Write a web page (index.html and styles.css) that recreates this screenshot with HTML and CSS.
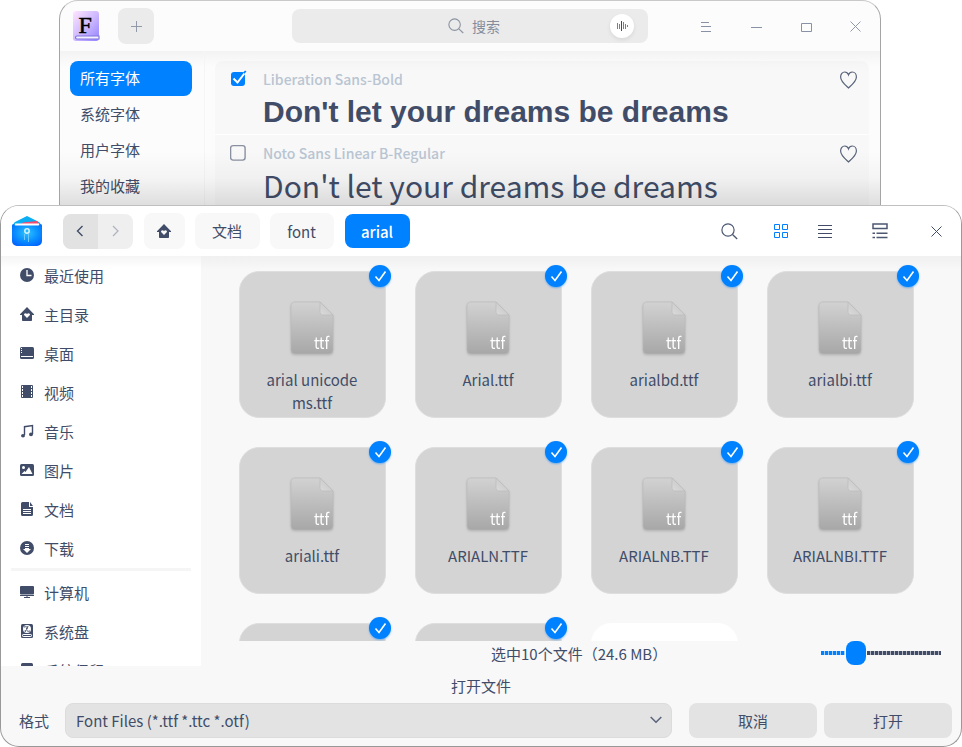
FILE: index.html
```html
<!DOCTYPE html>
<html lang="zh-CN">
<head>
<meta charset="utf-8">
<title>打开文件</title>
<link rel="stylesheet" href="styles.css">
</head>
<body>
<svg class="defs" width="0" height="0">
  <defs>
    <linearGradient id="paper" x1="0" y1="0" x2="0" y2="1"><stop offset="0" stop-color="#d2d2d2"/><stop offset="1" stop-color="#a7a7a7"/></linearGradient>
    <linearGradient id="fold" x1="1" y1="0" x2="0" y2="1"><stop offset="0" stop-color="#c4c4c4"/><stop offset="1" stop-color="#dadada"/></linearGradient>
    <linearGradient id="violet" x1="0" y1="0" x2="1" y2="1"><stop offset="0" stop-color="#ffe6ff"/><stop offset=".5" stop-color="#d0baff"/><stop offset="1" stop-color="#9283ff"/></linearGradient>
    <radialGradient id="folder" cx=".5" cy=".4" r=".75"><stop offset="0" stop-color="#2cc4ff"/><stop offset=".5" stop-color="#0a90ff"/><stop offset="1" stop-color="#0059ff"/></radialGradient>
    <symbol id="house" viewBox="0 0 14 14"><path fill="#414d68" fill-rule="evenodd" d="M7 0 14 7.2V8h-2v5.2a.8.8 0 0 1-.8.8H2.800a.8.8 0 0 1-.8-.8V8H0v-.8ZM7 11 9.700 8.300C10.800 6.700 8.500 5.200 7 6.900 5.500 5.200 3.200 6.700 4.300 8.300Z"/></symbol>
    <symbol id="heart" viewBox="0 0 18 18"><path fill="none" stroke="#58627a" stroke-width="1.200" d="M8.500 17C5 13.800.6 10.300.6 6 .6 3 2.500 1 4.700 1c1.800 0 3.100 1 3.800 2.900C9.200 2 10.500 1 12.300 1c2.200 0 4.100 2 4.100 5 0 4.300-4.400 7.800-7.900 11Z"/></symbol>
    <symbol id="lens" viewBox="0 0 17 17"><circle cx="7" cy="7" r="6.100" fill="none" stroke="currentColor" stroke-width="1.200"/><path stroke="currentColor" stroke-width="1.300" d="m11.500 11.500 4.700 4.500"/></symbol>
    <symbol id="cross" viewBox="0 0 12 12"><path fill="none" stroke="currentColor" d="m.5.5 10 10m0-10-10 10"/></symbol>
    <symbol id="ttf" viewBox="0 0 44 54"><path fill="url(#paper)" stroke="#bbb" stroke-width=".6" d="M4 1h26l13 13v35a4 4 0 0 1-4 4H5a4 4 0 0 1-4-4V5a4 4 0 0 1 3-4Z"/><path fill="url(#fold)" stroke="#bbb" stroke-width=".6" d="M30 1v10a3 3 0 0 0 3 3h10Z"/><text x="24" y="48" fill="#fff" class="ext" textLength="15" lengthAdjust="spacingAndGlyphs">ttf</text></symbol>
    <symbol id="tick" viewBox="0 0 22 22"><path fill="none" stroke="#fff" stroke-width="1.600" d="m6.500 11.500 3.500 4 6.500-9"/></symbol>
  </defs>
</svg>
<main class="desktop">
  <section class="window manager">
    <header class="bar manager-bar">
      <svg class="logo-f" width="28" height="32" viewBox="0 0 28 32"><rect x="1" y="1" width="26" height="30" rx="3" fill="url(#violet)"/><path d="M5 26h22v3H5a1.500 1.500 0 0 1 0-3" fill="#f3f0ff" stroke="#8274df" stroke-width="1.200"/><text x="6.500" y="22.500" class="serif-f">F</text></svg>
      <button class="add"><svg width="12" height="12"><path stroke="#929aaa" d="M5.500 0v11M0 5.500h11"/></svg></button>
      <div class="search"><svg width="16" height="16" color="#8d94a3"><use href="#lens"/></svg><span>搜索</span>
        <i class="voice"><svg width="12" height="12"><path stroke="#4b556e" stroke-opacity=".75" d="M1.500 3v6M3.500 4v5M7.500 2v7M9.500 4v5M11.500 5v2"/><path stroke="#414d68" d="M5.500 1v10"/></svg></i>
      </div>
      <div class="controls">
        <svg width="12" height="12"><path stroke="#8992a4" d="M1 1.500h8M1 5.500h10M1 10.500h10"/></svg>
        <svg width="12" height="12"><path stroke="#8992a4" d="M0 6.500h11"/></svg>
        <svg width="12" height="12"><path fill="none" stroke="#8992a4" d="M.5 2.500h10v8H.5Z"/></svg>
        <svg width="12" height="12" color="#929aaa"><use href="#cross"/></svg>
      </div>
    </header>
    <div class="manager-body">
      <nav class="groups"><a class="on">所有字体</a><a>系统字体</a><a>用户字体</a><a>我的收藏</a></nav>
      <div class="fonts">
        <article class="font">
          <svg class="box" width="18" height="18" viewBox="0 0 18 18"><rect x="1" y="2" width="14" height="14" rx="3" fill="#0081ff"/><path d="m3.500 8.500 4 4L15.500 2" fill="none" stroke="#fff" stroke-width="2"/><path d="m13.800 3.200 2-2.200" stroke="#0081ff" stroke-width="1.800"/></svg>
          <div><p class="name">Liberation Sans-Bold</p><p class="sample bold">Don't let your dreams be dreams</p></div>
          <svg class="fav" width="18" height="18"><use href="#heart"/></svg>
        </article>
        <article class="font">
          <svg class="box" width="18" height="18" viewBox="0 0 18 18"><rect x=".6" y="1.600" width="14.500" height="14.500" rx="2.500" fill="none" stroke="#8990a0" stroke-width="1.400"/></svg>
          <div><p class="name">Noto Sans Linear B-Regular</p><p class="sample regular">Don<span class="apostrophe">'</span>t let your dreams be dreams</p></div>
          <svg class="fav" width="18" height="18"><use href="#heart"/></svg>
        </article>
      </div>
    </div>
  </section>

  <section class="window dialog">
    <header class="bar dialog-bar">
      <svg class="logo-folder" width="32" height="32" viewBox="0 0 32 32"><path d="M2 11q0-3 3-4.500L16 1l11 5.500q3 1.500 3 4.500Z" fill="#0aaef3"/><path d="M12 7.500 26 6l3 4H9Z" fill="#f44b70"/><path d="M4 8.500h24v4H4Z" fill="#fff"/><path d="M1 10.500q0-1.500 1.500-1.500Q3 10.500 5 10.500h22q2 0 2.500-1.500Q31 9 31 10.500V26a5 5 0 0 1-5 5H6a5 5 0 0 1-5-5Z" fill="url(#folder)"/><path d="M13.500 19v6M17.500 19v8" stroke="#70c9ff"/><circle cx="16" cy="16" r="2.200" fill="none" stroke="#d5f2ff" stroke-width="1.500"/></svg>
      <div class="history"><span><svg width="8" height="12"><path fill="none" stroke="#414d68" stroke-width="1.400" d="M6.500 1 1.500 6l5 5"/></svg></span><span><svg width="8" height="12"><path fill="none" stroke="#adb2be" stroke-width="1.200" d="m1 1 5 5-5 5"/></svg></span></div>
      <a class="crumb home"><svg width="14" height="14"><use href="#house"/></svg></a>
      <a class="crumb docs">文档</a>
      <a class="crumb dir">font</a>
      <a class="crumb current">arial</a>
      <div class="tools">
        <svg width="17" height="17" color="#4c5771"><use href="#lens"/></svg>
        <svg class="grid-icon" width="14" height="14"><path fill="none" stroke="#0081ff" d="M.5.5h5v5h-5zM8.500.5h5v5h-5zM.5 8.500h5v5h-5zM8.500 8.500h5v5h-5z"/></svg>
        <svg class="list-icon" width="14" height="14"><path stroke="#414d68" d="M0 1.500h14M0 5.500h14M0 9.500h14M0 13.500h14"/></svg>
        <svg class="group-icon" width="16" height="16"><path fill="none" stroke="#4c5771" stroke-width="1.500" d="M1 1h14v4.500H1zM.5 10.200h2.500M4.500 10.200h11M.5 14.500h2.500M4.500 14.500h11"/></svg>
        <svg class="close-icon" width="12" height="12" color="#414d68"><use href="#cross"/></svg>
      </div>
    </header>
    <div class="browser">
      <nav class="places">
        <a><svg width="14" height="14"><circle cx="7" cy="7" r="7" fill="#414d68"/><path d="M7 2v5.500h4.500" fill="none" stroke="#fff" stroke-width="1.300"/></svg>最近使用</a>
        <a><svg width="14" height="14"><use href="#house"/></svg>主目录</a>
        <a><svg width="14" height="14"><rect y="1" width="14" height="12" rx="1.500" fill="#414d68"/><path stroke="#fff" d="M1.500 2v1M1.500 4v1M1.500 6v1M1 10.500h12"/></svg>桌面</a>
        <a><svg width="14" height="14"><rect x="1" width="12" height="13" rx="1" fill="#414d68"/><path stroke="#fff" stroke-dasharray="2 1" d="M2.500 1v11M11.500 1v11"/></svg>视频</a>
        <a><svg width="14" height="14"><path fill="none" stroke="#414d68" stroke-width="1.400" d="M4.500 11V2.700l8-1.200V10"/><ellipse cx="3" cy="11.700" rx="2" ry="1.800" fill="#414d68"/><ellipse cx="11" cy="10.400" rx="2" ry="1.800" fill="#414d68"/></svg>音乐</a>
        <a><svg width="14" height="14"><rect y="1" width="14" height="12" rx="1.500" fill="#414d68"/><circle cx="3.500" cy="4.500" r="1.500" fill="#fff"/><path fill="#fff" d="m1.500 11 3-3 1 1 3.500-5 3.500 7Z"/></svg>图片</a>
        <a><svg width="14" height="14"><path fill="#414d68" d="M2.500 0H9v5h4v7.500a1.500 1.500 0 0 1-1.500 1.500h-9A1.500 1.500 0 0 1 1 12.500v-11A1.500 1.500 0 0 1 2.500 0M10 0l3 4h-3Z"/><path stroke="#fff" d="M3 7.500h8M3 9.500h8M3 11.500h8"/></svg>文档</a>
        <a><svg width="14" height="14"><circle cx="7" cy="7" r="7" fill="#414d68"/><path fill="#fff" d="M5 3h4v1H5zM5 5h4v1H5zM5 7h4v1h2l-4 4-4-4h2z"/></svg>下载</a>
        <hr>
        <a><svg width="14" height="14"><rect y="1" width="14" height="8.500" rx="1" fill="#414d68"/><path stroke="#414d68" d="M0 10.500h14M6 12h2M4 12.500h6"/></svg>计算机</a>
        <a><svg width="14" height="14"><rect x="1" width="12" height="14" rx="1.500" fill="#414d68"/><circle cx="7" cy="5" r="4" fill="#fff"/><path fill="none" stroke="#414d68" d="M4 3c3-1 4 1 3 2s0 3 3 2M8 2q0 2-2 3M5 6q1 1 0 2"/><rect x="2.500" y="10.500" width="9" height="2" rx=".7" fill="none" stroke="#fff"/></svg>系统盘</a>
        <a><svg width="14" height="14"><rect x="1" width="12" height="14" rx="1.500" fill="#414d68"/></svg>系统保留</a>
      </nav>
      <div class="pane">
        <div class="files">
          <figure><svg class="doc" width="44" height="54"><use href="#ttf"/></svg><figcaption>arial unicode ms.ttf</figcaption><i class="badge"><svg width="22" height="22"><use href="#tick"/></svg></i></figure>
          <figure><svg class="doc" width="44" height="54"><use href="#ttf"/></svg><figcaption>Arial.ttf</figcaption><i class="badge"><svg width="22" height="22"><use href="#tick"/></svg></i></figure>
          <figure><svg class="doc" width="44" height="54"><use href="#ttf"/></svg><figcaption>arialbd.ttf</figcaption><i class="badge"><svg width="22" height="22"><use href="#tick"/></svg></i></figure>
          <figure><svg class="doc" width="44" height="54"><use href="#ttf"/></svg><figcaption>arialbi.ttf</figcaption><i class="badge"><svg width="22" height="22"><use href="#tick"/></svg></i></figure>
          <figure><svg class="doc" width="44" height="54"><use href="#ttf"/></svg><figcaption>ariali.ttf</figcaption><i class="badge"><svg width="22" height="22"><use href="#tick"/></svg></i></figure>
          <figure><svg class="doc" width="44" height="54"><use href="#ttf"/></svg><figcaption>ARIALN.TTF</figcaption><i class="badge"><svg width="22" height="22"><use href="#tick"/></svg></i></figure>
          <figure><svg class="doc" width="44" height="54"><use href="#ttf"/></svg><figcaption>ARIALNB.TTF</figcaption><i class="badge"><svg width="22" height="22"><use href="#tick"/></svg></i></figure>
          <figure><svg class="doc" width="44" height="54"><use href="#ttf"/></svg><figcaption>ARIALNBI.TTF</figcaption><i class="badge"><svg width="22" height="22"><use href="#tick"/></svg></i></figure>
          <figure><i class="badge"><svg width="22" height="22"><use href="#tick"/></svg></i></figure>
          <figure><i class="badge"><svg width="22" height="22"><use href="#tick"/></svg></i></figure>
          <figure class="idle"></figure>
        </div>
        <div class="status"><span>选中10个文件（24.6 MB）</span><div class="slider"><i class="low"></i><i class="knob"></i><i class="high"></i></div></div>
      </div>
    </div>
    <div class="caption">打开文件</div>
    <footer class="actions">
      <label>格式</label>
      <div class="select"><span>Font Files (*.ttf *.ttc *.otf)</span><svg width="12" height="8"><path fill="none" stroke="#58627a" stroke-width="1.500" d="m.7 1 5.300 5.300L11.300 1"/></svg></div>
      <button>取消</button><button>打开</button>
    </footer>
  </section>
</main>
</body>
</html>
```

FILE: styles.css
```css
* { box-sizing: border-box; }
body, p, figure { margin: 0; }
body, button {
  font: 15px/24px "Noto Sans CJK SC", "Noto Sans", sans-serif;
  color: #414d68;
}
body { background: #fff; overflow: hidden; }
svg { display: block; flex: none; }
.defs { position: absolute; }
button { border: 0; padding: 0; display: flex; align-items: center; justify-content: center; }
.desktop { position: relative; width: 962px; height: 747px; overflow: hidden; }
.window { position: absolute; border: 1px solid #a5a5a5; overflow: hidden; }
.bar { display: flex; align-items: center; height: 50px; }

/* Font manager */
.manager { left: 59px; top: 0; width: 822px; height: 300px; border-radius: 19px; border-top-color: #c9c9c9; background: #fcfcfc; }
.manager::after {
  content: ""; position: absolute; left: 0; right: 0; top: 150px; height: 55px;
  background: linear-gradient(rgba(0,0,0,0), rgba(0,0,0,.03) 50%, rgba(0,0,0,.12));
}
.logo-f { margin-left: 12px; }
.serif-f { font: 24px "Liberation Serif", serif; fill: #000; stroke: #000; stroke-width: .5px; }
.add { width: 36px; height: 36px; margin-left: 18px; border-radius: 8px; background: #ebebeb; }
.add svg { margin: 2px 0 0 2px; }
.search {
  position: relative; display: flex; align-items: center; gap: 8px; width: 356px; height: 34px;
  margin-left: 138px; padding-left: 156px; border-radius: 8px; background: #ebebeb; color: #858d9d; font-size: 14px;
}
.voice {
  display: flex; align-items: center; justify-content: center; width: 24px; height: 24px;
  margin: 0 14px 0 auto; border-radius: 50%; background: #fff; box-shadow: 0 2px 4px rgba(0,0,0,.08);
}
.controls { display: flex; margin: 2px 0 0 52px; gap: 38px; }
.controls svg:nth-child(2) { margin-left: 1px; }
.controls svg:nth-child(4) { margin-left: -1px; }
.manager-body { display: flex; height: 249px; background: linear-gradient(#f3f3f3, #fcfcfc 16px); }
.groups { display: flex; flex-direction: column; gap: 1px; width: 145px; padding: 10px 12px 0 10px; border-right: 1px solid #f5f5f5; }
.groups a { height: 35px; padding-left: 10px; line-height: 34px; border-radius: 8px; }
.groups .on { color: #fff; background: #0081ff; }
.fonts { width: 654px; margin: 10px 0 0 10px; border-radius: 8px; background: linear-gradient(#f4f4f4, #f8f8f8 10px); }
.font { display: flex; height: 74px; padding: 8px 11px 0 15px; border-bottom: 1px solid #fff; }
.font > div { flex: 1; margin-left: 15px; }
.box { margin-top: 1px; }
.name { margin: -1px 0 1px; color: #b9c5d2; font-size: 14px; line-height: 22px; font-weight: 500; }
.sample { font-size: 30px; line-height: 42px; white-space: nowrap; }
.bold { font-family: "Liberation Sans", sans-serif; font-weight: 700; }
.regular { margin-top: -1px; font-weight: 400; }
.apostrophe { vertical-align: -3px; line-height: 0; }
.fav { margin-top: 2px; }

/* File dialog */
.dialog { left: 0; top: 205px; width: 962px; height: 542px; border-radius: 19px; background: #f8f8f8; border-color: #999; border-top-color: #c0c0c0; }
.dialog-bar { background: #fff; }
.logo-folder { margin-left: 10px; }
.history { display: flex; width: 70px; height: 35px; margin-left: 20px; border-radius: 8px; overflow: hidden; background: #efefef; }
.history span { display: flex; width: 35px; align-items: center; justify-content: center; }
.history span:first-child { padding-right: 2px; background: #e2e2e2; }
.crumb { display: flex; align-items: center; justify-content: center; height: 36px; padding-right: 1px; border-radius: 8px; background: #f8f8f8; }
.home { width: 41px; margin-left: 11px; }
.docs { width: 65px; margin-left: 10px; }
.dir { width: 64px; margin-left: 10px; padding-top: 2px; }
.current { width: 65px; height: 34px; margin-left: 11px; padding-top: 2px; color: #fff; background: #0081ff; font-weight: 500; }
.tools { display: flex; align-items: center; margin-left: 311px; }
.grid-icon { margin-left: 36px; }
.list-icon { margin-left: 30px; }
.group-icon { margin-left: 40px; }
.close-icon { margin: 1px 0 0 43px; }
.browser { display: flex; height: 410px; }
.places { width: 200px; overflow: hidden; background: linear-gradient(#f5f5f5, #fff 12px); }
.places a { display: flex; align-items: center; gap: 10px; height: 39px; padding-left: 19px; }
.places svg { margin-top: -1px; }
.places hr { height: 3px; margin: 0 10px 2px 10px; border: 0; background: #f5f5f5; }
.pane { flex: 1; }
.files {
  display: grid; grid-template-columns: repeat(4, 147px); grid-auto-rows: 147px; gap: 29px;
  height: 385px; padding: 15px 0 0 38px; overflow: hidden; background: linear-gradient(#f0f0f0, #f8f8f8 14px);
}
figure { position: relative; display: flex; flex-direction: column; align-items: center; padding: 30px 2px 0 0; border: 1px solid #dedede; border-radius: 20px; background: #d4d4d4; }
.idle { background: #fff; border-color: #fff; }
.doc { margin-top: -1px; filter: drop-shadow(0 1px 1px rgba(0,0,0,.15)); }
.ext { font-family: "Noto Sans CJK SC", sans-serif; font-size: 16px; font-weight: 400; }
figcaption { width: 110px; margin: 13px 0 0 1px; line-height: 23px; text-align: center; }
.badge { position: absolute; top: -7px; right: -6px; width: 22px; height: 22px; border-radius: 50%; background: #0081ff; box-shadow: 0 1px 2px rgba(0,129,255,.5); }
.status { display: flex; align-items: center; justify-content: space-between; height: 25px; padding: 0 20px 0 290px; }
.slider { display: flex; align-items: center; width: 120px; margin-top: -2px; }
.slider i { height: 4px; }
.low { width: 24px; background: repeating-linear-gradient(90deg, #0081ff 0 3px, #a9d3fb 3px 4px); }
.slider .knob { width: 20px; height: 24px; margin: 0 1px; border-radius: 8px; background: #0081ff; }
.high { flex: 1; background: repeating-linear-gradient(90deg, #414d68 0 3px, #b5bac4 3px 4px); }
.caption { height: 37px; line-height: 40px; text-align: center; }
.actions { display: flex; align-items: center; height: 34px; padding: 0 9px 0 18px; }
.actions label { width: 46px; padding-top: 2px; }
.select { display: flex; align-items: center; justify-content: space-between; width: 607px; height: 35px; padding: 0 9px 0 10px; border: 1px solid #dcdcdc; border-radius: 8px; background: #e3e3e3; }
.select span { padding-top: 2px; }
.actions button { width: 128px; height: 35px; margin-left: 7px; padding-top: 2px; border-radius: 8px; background: #e3e3e3; }
.select + button { margin-left: 17px; }
```
